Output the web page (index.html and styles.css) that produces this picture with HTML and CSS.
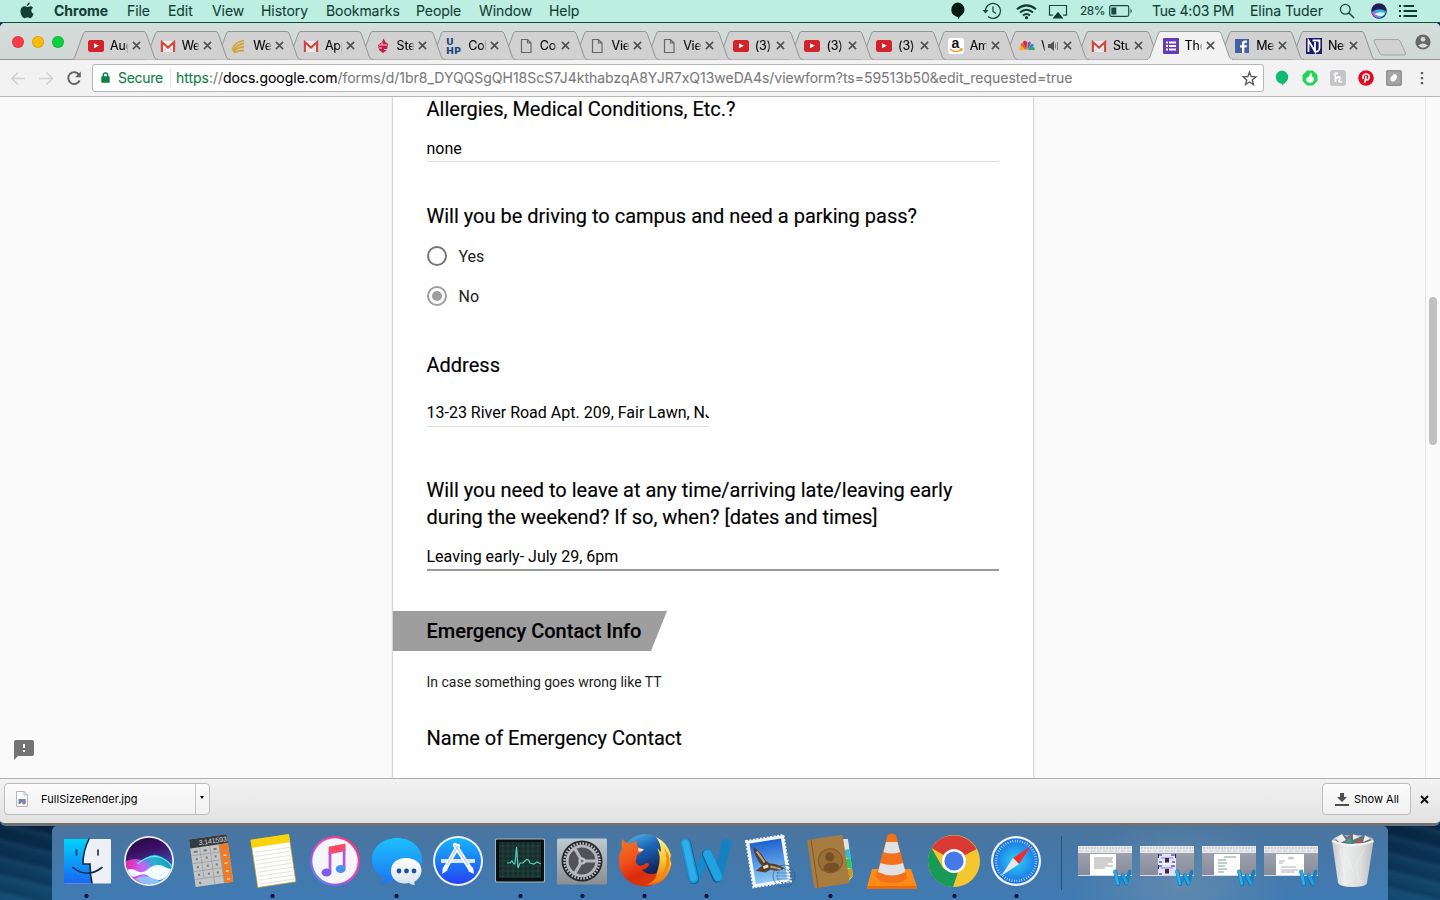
FILE: index.html
```html
<!DOCTYPE html>
<html lang="en">
<head>
<meta charset="utf-8">
<title>The Form</title>
<link rel="stylesheet" href="styles.css">
</head>
<body>
<svg class="defs" width="0" height="0">
<defs>
<linearGradient id="gBlue" x2="0" y2="1"><stop offset="0" stop-color="#1cc0fb"/><stop offset="1" stop-color="#1d76f3"/></linearGradient>
<linearGradient id="gApp" x2="0" y2="1"><stop offset="0" stop-color="#16b6fb"/><stop offset="1" stop-color="#2443f2"/></linearGradient>
<linearGradient id="gTunes" x1="1" y1="0" x2="0" y2="1"><stop offset="0" stop-color="#fb3358"/><stop offset=".45" stop-color="#e84bb8"/><stop offset=".7" stop-color="#a050ee"/><stop offset="1" stop-color="#2ab9f6"/></linearGradient>
<linearGradient id="gNote" x2="0" y2="1"><stop offset="0" stop-color="#fa3d5a"/><stop offset=".55" stop-color="#b552e6"/><stop offset="1" stop-color="#3a8cf4"/></linearGradient>
<linearGradient id="gFind" x2="0" y2="1"><stop offset="0" stop-color="#00d3fd"/><stop offset="1" stop-color="#1967f2"/></linearGradient>
<linearGradient id="gWhite" x2="0" y2="1"><stop offset="0" stop-color="#fff"/><stop offset="1" stop-color="#d9e2ea"/></linearGradient>
<linearGradient id="gMetal" x2="0" y2="1"><stop offset="0" stop-color="#bccad0"/><stop offset="1" stop-color="#8b8e91"/></linearGradient>
<linearGradient id="gFox" x2=".4" y2="1"><stop offset="0" stop-color="#f47a22"/><stop offset=".5" stop-color="#f0501a"/><stop offset=".85" stop-color="#dc2a0c"/><stop offset="1" stop-color="#d8360e"/></linearGradient>
<linearGradient id="gGlobe" x2=".4" y2="1"><stop offset="0" stop-color="#5cc0ee"/><stop offset=".45" stop-color="#1b64b4"/><stop offset="1" stop-color="#14215c"/></linearGradient>
<linearGradient id="gFlame" x2="0" y2="1"><stop offset="0" stop-color="#fff08a"/><stop offset=".5" stop-color="#fbc62c"/><stop offset="1" stop-color="#ee6010"/></linearGradient>
<linearGradient id="gSky" x2="0" y2="1"><stop offset="0" stop-color="#1d63cf"/><stop offset="1" stop-color="#8fcbf5"/></linearGradient>
<linearGradient id="gSiri" x2=".3" y2="1"><stop offset="0" stop-color="#200a3c"/><stop offset=".35" stop-color="#3a0f63"/><stop offset=".55" stop-color="#3b2a86"/><stop offset="1" stop-color="#4c7be0"/></linearGradient>
<linearGradient id="gTeal" x2="1" y2="0"><stop offset="0" stop-color="#b45cf0"/><stop offset=".5" stop-color="#25c8e4"/><stop offset="1" stop-color="#0f9fa8"/></linearGradient>
<linearGradient id="gPink" x2="1" y2="0"><stop offset="0" stop-color="#ff1fa6"/><stop offset=".5" stop-color="#d35cf4"/><stop offset="1" stop-color="#5ca8f8"/></linearGradient>
<radialGradient id="gSaf"><stop offset="0" stop-color="#2ad4f7"/><stop offset="1" stop-color="#1d6fe2"/></radialGradient>
<linearGradient id="gTrash" x2="1" y2="0"><stop offset="0" stop-color="#c4c6c8"/><stop offset=".3" stop-color="#eceeee"/><stop offset=".7" stop-color="#dcdddd"/><stop offset="1" stop-color="#b9bbbd"/></linearGradient>
<linearGradient id="gThumb" x2="0" y2="1"><stop offset="0" stop-color="#a4a8b4"/><stop offset="1" stop-color="#858b99"/></linearGradient>
<clipPath id="siriClip"><circle cx="26" cy="26" r="23.300"/></clipPath>
<symbol id="tab" viewBox="0 0 86 29"><path d="M0 28.500C2 28 2.500 27 3.200 25L11 3.500C12 1 12.500.5 14 .5H71C73 .5 73.500 1 74.500 3.500L82 25C83 27.500 83.500 28 86 28.500" fill="#d1d1d1" stroke="#919594"/></symbol>
<symbol id="tabOn" viewBox="0 0 86 29"><path d="M0 29V28.500C2 28 2.500 27 3.200 25L11 3.500C12 1 12.500.5 14 .5H71C73 .5 73.500 1 74.500 3.500L82 25C83 27.500 83.500 28 86 28.500V29" fill="#f2f2f2" stroke="#9a9d9c"/><path d="M1 29H85" stroke="#f2f2f2" stroke-width="2"/></symbol>
<symbol id="x" viewBox="0 0 10 10"><path d="M1 1L9 9M9 1L1 9" stroke="#505050" stroke-width="1.800" fill="none"/></symbol>
<symbol id="yt" viewBox="0 0 16 16"><rect y="2" width="16" height="12" rx="2.500" fill="#d3232a"/><path d="M6 5.300V10.300L10.800 7.800Z" fill="#fff"/></symbol>
<symbol id="gm" viewBox="0 0 16 16"><rect x="1" y="3" width="14" height="11" fill="#ececec"/><path d="M3 13.500L8 8.500L13 13.500" stroke="#ccc" fill="none"/><path d="M1.900 14V4L8 9.500L14.100 4V14" fill="none" stroke="#d5443a" stroke-width="2.100"/></symbol>
<symbol id="doc" viewBox="0 0 16 16"><path d="M3.500 1.500H9.500L13 5V14.500H3.500ZM9.500 1.500V5H13" fill="none" stroke="#666" stroke-width="1.200"/></symbol>
<symbol id="gold" viewBox="0 0 16 16"><path d="M1 12C3 6 7 3 13 2.500L13 14L3 14.500Z" fill="#d9bd74" opacity=".5"/><path d="M1 12C3 6 7 3 13 2.500M2 13C5 8 8 6 13 5.500M2 14C5 10.500 9 9 13 9M3 14.500C7 12.500 10 12.500 13 12.500" stroke="#cfa23a" stroke-width="1.400" fill="none"/></symbol>
<symbol id="torch" viewBox="0 0 16 16"><path d="M8.500.5L10.500 4L13 6L12 12L8 15L4 12L3 7L7 4Z" fill="#c51e49"/><path d="M4 7H12M4 10H7M9 11.500H13M7 4V7" stroke="#eec8d0" stroke-width="1"/></symbol>
<symbol id="word" viewBox="0 0 56 56"><path d="M40.500 43L49.500 10" stroke="#1581c2" stroke-width="10" stroke-linecap="round"/><path d="M18 44.500L30 20" stroke="#178acc" stroke-width="9.500" stroke-linecap="round"/><path d="M30 20.500L40 43.500" stroke="#0d5c94" stroke-width="10" stroke-linecap="round"/><path d="M30.500 20L41 43" stroke="#22a2e0" stroke-width="9" stroke-linecap="round"/><path d="M9 10L17 45" stroke="#0d639e" stroke-width="10.500" stroke-linecap="round"/><path d="M8.500 9.500L16.500 44.500" stroke="#1f98d6" stroke-width="9.500" stroke-linecap="round"/><path d="M8.500 9L16.500 44" stroke="#2eb0ea" stroke-width="6" stroke-linecap="round"/></symbol>
<symbol id="siri" viewBox="0 0 52 52"><circle cx="26" cy="26" r="25" fill="#eceef2"/><circle cx="26" cy="26" r="23.300" fill="url(#gSiri)"/><g clip-path="url(#siriClip)"><path d="M12 32Q26 18 34 20T51 34V44H12Z" fill="url(#gTeal)" opacity=".85"/><path d="M1 27Q10 22 18 25T36 38L34 52H1Z" fill="url(#gPink)" opacity=".9"/><path d="M14 29Q26 19 36 22T50 34" fill="none" stroke="#5ff0f6" stroke-width="1.200"/><path d="M2 36Q8 32 14 36Q19 39 24 35Q32 28 40 31Q46 35 51 34V39Q45 41 40 44Q32 47 24 40Q19 38 14 41Q8 43 2 40Z" fill="#f2fdff"/><path d="M12 44Q22 37 40 48L26 52Z" fill="#8fd3ff" opacity=".8"/></g></symbol>
<symbol id="thumb" viewBox="0 0 62 74"><rect x="4" y="20" width="54" height="30" fill="url(#gThumb)"/><rect x="4" y="20" width="54" height="7" fill="#e8e9ec"/><path d="M5 22H57" stroke="#b3b5ba" stroke-dasharray="2 1"/><path d="M5 25H57" stroke="#c9cbd0" stroke-dasharray="4 2"/><path d="M4 49.500H58" stroke="#d8dadf"/></symbol>
</defs>
</svg>
<header class="menubar">
  <nav class="menus">
    <svg class="apple" width="14" height="17" viewBox="0 0 14 17"><path d="M9.800.2C10 1.900 8.500 3.900 6.800 3.900C6.600 2.200 8.200.4 9.800.2ZM7.200 5C8 5 8.700 4.200 10.200 4.200C11.500 4.200 12.500 4.900 13.100 5.700C10.500 7.200 10.900 10.700 13.600 11.800C13 13.700 11.600 16.200 10.100 16.200C9 16.200 8.600 15.600 7.300 15.600C6 15.600 5.500 16.200 4.500 16.200C2.600 16.200.5 12.500.5 9.300C.5 6 2.500 4.300 4.500 4.300C5.700 4.300 6.500 5 7.200 5Z" fill="#123f34"/></svg>
    <b>Chrome</b><span>File</span><span>Edit</span><span>View</span><span>History</span><span>Bookmarks</span><span>People</span><span>Window</span><span>Help</span>
  </nav>
  <div class="status">
    <svg width="15" height="18" viewBox="0 0 15 18"><path d="M7.500.5A7 7 0 0 1 14.500 7.800C14.500 11 12 13 10 14.500L8 17.500V15A7.300 7.300 0 0 1 7.500.5Z" fill="#021a12"/></svg>
    <svg width="20" height="18" viewBox="0 0 20 18"><path d="M3.500 9A7.500 7.500 0 1 1 6 14.500M11 4.500V9.500L14 11.500" fill="none" stroke="#174a3d" stroke-width="1.300"/><path d="M.5 8H6.500L3.500 11.500Z" fill="#174a3d"/></svg>
    <svg width="21" height="17" viewBox="0 0 21 17"><path d="M1 6.300Q10.500-1.500 20 6.300M4 9.600Q10.500 4 17 9.600M7 12.600Q10.500 9.500 14 12.600" fill="none" stroke="#103c31" stroke-width="2"/><circle cx="10.500" cy="14.700" r="1.600" fill="#103c31"/></svg>
    <svg width="20" height="17" viewBox="0 0 20 17"><path d="M5 12.200H1.500V2.500H18.500V12.200H15" fill="none" stroke="#174a3d" stroke-width="1.200"/><path d="M10 8.800L15.500 15.500H4.500Z" fill="#103c31"/></svg>
    <span class="pct">28%</span>
    <svg width="25" height="14" viewBox="0 0 25 14"><rect x=".7" y="1.700" width="19" height="10.600" rx="1.500" fill="none" stroke="#174a3d" stroke-width="1.200"/><rect x="2.300" y="3.500" width="5" height="7" fill="#174a3d"/><path d="M21.500 4.500V9.500Q24 7 21.500 4.500" fill="#174a3d"/></svg>
    <span class="clock">Tue 4:03 PM</span><span class="user">Elina Tuder</span>
    <svg width="16" height="16" viewBox="0 0 16 16"><circle cx="6.300" cy="6.300" r="4.900" fill="none" stroke="#174a3d" stroke-width="1.300"/><path d="M9.800 9.800L15 15" stroke="#174a3d" stroke-width="1.500"/></svg>
    <svg width="16" height="16" viewBox="0 0 16 16"><circle cx="8" cy="8" r="7.800" fill="#221c56"/><path d="M1 9Q7 4 15 8Q15 13 9 15Q3 15 1 9Z" fill="#2fb2d8"/><path d="M.6 9Q5 7 9 12L6 15Q1.500 13 .6 9Z" fill="#b25fe4"/><path d="M3 11Q8 8 14 10Q12 14 8 13Z" fill="#d4f7ff"/></svg>
    <svg width="19" height="14" viewBox="0 0 19 14"><path d="M0 2H2M0 7H2M0 12H2M4.500 2H15M4.500 7H18M4.500 12H18" stroke="#103c31" stroke-width="1.800"/></svg>
  </div>
</header>

<main class="window">
  <div class="tabstrip">
    <div class="lights"><i class="red"></i><i class="amber"></i><i class="green"></i></div>
    <div class="tabs">
      <div class="tab t1"><svg class="shape"><use href="#tab"/></svg><svg class="fav"><use href="#yt"/></svg><span>Aug</span><svg class="close"><use href="#x"/></svg></div>
      <div class="tab t2"><svg class="shape"><use href="#tab"/></svg><svg class="fav"><use href="#gm"/></svg><span>We</span><svg class="close"><use href="#x"/></svg></div>
      <div class="tab t3"><svg class="shape"><use href="#tab"/></svg><svg class="fav"><use href="#gold"/></svg><span>We</span><svg class="close"><use href="#x"/></svg></div>
      <div class="tab t4"><svg class="shape"><use href="#tab"/></svg><svg class="fav"><use href="#gm"/></svg><span>App</span><svg class="close"><use href="#x"/></svg></div>
      <div class="tab t5"><svg class="shape"><use href="#tab"/></svg><svg class="fav"><use href="#torch"/></svg><span>Ste</span><svg class="close"><use href="#x"/></svg></div>
      <div class="tab t6"><svg class="shape"><use href="#tab"/></svg><svg class="fav" viewBox="0 0 16 16"><text class="uhp" x="0" y="6.500">U</text><text class="uhp" x="0" y="15.500">HP</text></svg><span>Col</span><svg class="close"><use href="#x"/></svg></div>
      <div class="tab t7"><svg class="shape"><use href="#tab"/></svg><svg class="fav"><use href="#doc"/></svg><span>Cor</span><svg class="close"><use href="#x"/></svg></div>
      <div class="tab t8"><svg class="shape"><use href="#tab"/></svg><svg class="fav"><use href="#doc"/></svg><span>Vie</span><svg class="close"><use href="#x"/></svg></div>
      <div class="tab t9"><svg class="shape"><use href="#tab"/></svg><svg class="fav"><use href="#doc"/></svg><span>Vie</span><svg class="close"><use href="#x"/></svg></div>
      <div class="tab t10"><svg class="shape"><use href="#tab"/></svg><svg class="fav"><use href="#yt"/></svg><span>(3)</span><svg class="close"><use href="#x"/></svg></div>
      <div class="tab t11"><svg class="shape"><use href="#tab"/></svg><svg class="fav"><use href="#yt"/></svg><span>(3)</span><svg class="close"><use href="#x"/></svg></div>
      <div class="tab t12"><svg class="shape"><use href="#tab"/></svg><svg class="fav"><use href="#yt"/></svg><span>(3)</span><svg class="close"><use href="#x"/></svg></div>
      <div class="tab t13"><svg class="shape"><use href="#tab"/></svg><svg class="fav" viewBox="0 0 16 16"><rect width="16" height="16" rx="3" fill="#fff"/><text class="amz" x="3.500" y="10">a</text><path d="M2 11Q8 16 13.500 11.500M11.500 11H14V13" fill="none" stroke="#f79a1d" stroke-width="1.300"/></svg><span>Am</span><svg class="close"><use href="#x"/></svg></div>
      <div class="tab t14"><svg class="shape"><use href="#tab"/></svg><svg class="fav" viewBox="0 0 16 16"><path d="M7 12L1 12Q-1 9 2.500 8Z" fill="#f6b51c"/><path d="M7 12L1.500 7.500Q2 4 5 5Z" fill="#ee6428"/><path d="M7.500 12L4 4Q6 1.500 8 4Z" fill="#d32441"/><path d="M8.500 12L8.500 5Q11 2 12 5Z" fill="#7555a6"/><path d="M9 12L11.500 6.500Q15.500 5 14.500 8Z" fill="#2482c9"/><path d="M9 12L14 8.500Q17 11 15 12Z" fill="#2ca55b"/></svg><span class="short">\</span><svg class="sound" width="11" height="10" viewBox="0 0 11 10"><path d="M0 3H2.500L6 0V10L2.500 7H0Z" fill="#555"/><path d="M7.500 2.500V7.500M9.500 1V9" stroke="#777" stroke-width=".9"/></svg><svg class="close"><use href="#x"/></svg></div>
      <div class="tab t15"><svg class="shape"><use href="#tab"/></svg><svg class="fav"><use href="#gm"/></svg><span>Stu</span><svg class="close"><use href="#x"/></svg></div>
      <div class="tab active"><svg class="shape"><use href="#tabOn"/></svg><svg class="fav" viewBox="0 0 16 16"><rect width="16" height="16" rx="1" fill="#673ab7"/><path d="M3 4.500H5M3 8H5M3 11.500H5M6 4.500H13M6 8H13M6 11.500H13" stroke="#fff" stroke-width="1.800"/></svg><span>The</span><svg class="close"><use href="#x"/></svg></div>
      <div class="tab t17"><svg class="shape"><use href="#tab"/></svg><svg class="fav" viewBox="0 0 16 16"><rect x="1" y="1" width="14" height="14" fill="#4460a0"/><path d="M10.300 15V9.500H12.500L12.900 7.300H10.300V5.800Q10.300 4.700 11.600 4.700H13V2.500H11Q8 2.500 8 5.500V7.300H6V9.500H8V15Z" fill="#fff"/></svg><span>Me</span><svg class="close"><use href="#x"/></svg></div>
      <div class="tab t18"><svg class="shape"><use href="#tab"/></svg><svg class="fav" viewBox="0 0 16 16"><rect width="16" height="16" fill="#191970"/><path d="M2.500 14V2.500L9 13.500V4M6.500 2.500H13.500V10Q13 14 9.500 13.500" fill="none" stroke="#fff" stroke-width="1.800"/></svg><span>New</span><svg class="close"><use href="#x"/></svg></div>
    </div>
    <svg class="newtab" width="34" height="17" viewBox="0 0 34 17"><path d="M3 .5H24Q26 .5 27 2L32.500 14Q33 16 31 16H10Q8 16 7 14.500L1 2.500Q.5.5 3 .5Z" fill="#d0d1d0" stroke="#a2a5a4"/></svg>
    <svg class="person" width="16" height="16" viewBox="0 0 16 16"><circle cx="8" cy="8" r="7.600" fill="#656968"/><circle cx="8" cy="5.300" r="2.400" fill="#d2d9d6"/><path d="M3.200 11.400Q8 7.500 12.800 11.400Q8 16 3.200 11.400Z" fill="#d2d9d6"/></svg>
  </div>
  <div class="toolbar">
    <svg class="nav" width="92" height="37" viewBox="0 0 92 37"><path d="M25 18.500H12M18 12.500L12 18.500L18 24.500M39 18.500H52M46.500 12.500L52.500 18.500L46.500 24.500" fill="none" stroke="#d1d1d1" stroke-width="1.600"/><path d="M79 14.600A5.900 5.900 0 1 0 79.600 20.500" fill="none" stroke="#636363" stroke-width="1.900"/><path d="M80.800 11.500V17.300H75Z" fill="#636363"/></svg>
    <div class="omnibox">
      <svg class="lock" width="9" height="11" viewBox="0 0 9 11"><path d="M2.300 5V3Q2.300 1 4.500 1T6.700 3V5" fill="none" stroke="#0b8043" stroke-width="1.400"/><rect x=".3" y="4.300" width="8.400" height="6.500" rx=".7" fill="#0b8043"/></svg>
      <span class="secure">Secure</span>
      <span class="url"><em>https</em>://<strong>docs.google.com</strong>/forms/d/1br8_DYQQSgQH18ScS7J4kthabzqA8YJR7xQ13weDA4s/viewform?ts=59513b50&amp;edit_requested=true</span>
      <svg class="star" width="15" height="15" viewBox="0 0 15 15"><path d="M7.500 1.200L9.200 5.500L13.900 5.900L10.300 8.900L11.400 13.500L7.500 11L3.600 13.500L4.700 8.900L1.100 5.900L5.800 5.500Z" fill="none" stroke="#5c5c5c" stroke-width="1.400"/></svg>
    </div>
    <div class="exts">
      <svg width="16" height="16" viewBox="0 0 16 16"><path d="M7.500.5A6.700 6.700 0 0 1 14.200 7.200C14.200 11 11 12.500 8 15.700V13.800A6.700 6.700 0 0 1 7.500.5Z" fill="#0fbb70"/></svg>
      <svg width="16" height="16" viewBox="0 0 16 16"><path d="M5 .5H11L15.500 5V11L11 15.500H5L.5 11V5Z" fill="#22d45a"/><path d="M4.500 8L7 6.500L8.500 3L9.800 3.500V6.500L11.700 7.500V10Q11.500 12.700 8 12.700Q4.300 12.700 4.300 10Z" fill="#fff"/></svg>
      <svg width="16" height="16" viewBox="0 0 16 16"><rect width="16" height="16" rx="3" fill="#c5c6c8"/><path d="M5.500 2.500V12M5.500 9Q8 6 10 7.500L9 11Q10 13 12 11M3.500 4.500L8 3" fill="none" stroke="#fff" stroke-width="1.700"/></svg>
      <svg width="16" height="16" viewBox="0 0 16 16"><circle cx="8" cy="8" r="7.800" fill="#e20a20"/><path d="M5.500 9Q4 6.500 6 4.800Q8 3.300 10.300 4.600Q12 6 10.700 8.600Q9.500 10.800 7.600 9.400M8.300 6L6.500 13" fill="none" stroke="#fff" stroke-width="1.600"/></svg>
      <svg width="16" height="16" viewBox="0 0 16 16"><rect width="16" height="16" rx="2" fill="#929292"/><rect x="1.500" y="1.500" width="13" height="13" rx="1" fill="#a4a4a4"/><ellipse cx="7.700" cy="8" rx="2.700" ry="4" transform="rotate(35 8 8)" fill="#fff"/></svg>
      <svg width="16" height="16" viewBox="0 0 16 16"><path d="M8 2V4.200M8 7V9.200M8 12V14.200" stroke="#606060" stroke-width="2.400"/></svg>
    </div>
  </div>
  <section class="page">
    <svg class="feedback" width="20" height="20" viewBox="0 0 20 20"><path d="M2 0H18Q20 0 20 2V14Q20 16 18 16H4L0 20V2Q0 0 2 0Z" fill="#737373"/><path d="M10 4V8M10 10V12" stroke="#fff" stroke-width="2"/></svg>
    <article class="card">
      <div class="q first"><h2>Allergies, Medical Conditions, Etc.?</h2><div class="answer">none</div></div>
      <div class="q choice"><h2>Will you be driving to campus and need a parking pass?</h2>
        <div class="option"><i class="radio"></i>Yes</div>
        <div class="option"><i class="radio on"></i>No</div></div>
      <div class="q address"><h2>Address</h2><div class="answer narrow">13-23 River Road Apt. 209, Fair Lawn, NJ 07410</div></div>
      <div class="q leave"><h2>Will you need to leave at any time/arriving late/leaving early<br>during the weekend? If so, when? [dates and times]</h2><div class="answer focus">Leaving early- July 29, 6pm</div></div>
      <div class="section"><h2>Emergency Contact Info</h2></div>
      <p>In case something goes wrong like TT</p>
      <h2 class="contact">Name of Emergency Contact</h2>
    </article>
    <div class="scroll"><i></i></div>
  </section>
  <footer class="downloads">
    <div class="file"><svg width="12" height="16" viewBox="0 0 12 16"><path d="M.5.5H8L11.500 4V15.500H.5Z" fill="#fbfbfb" stroke="#b8b8b8"/><path d="M8 .5V4H11.500" fill="none" stroke="#b8b8b8"/><path d="M2.500 8H9.500V11H6L4 13H2.500Z" fill="#6d80bb"/><circle cx="8" cy="11.500" r="2" fill="#8a8a95"/></svg><span>FullSizeRender.jpg</span><div class="drop"><i></i></div></div>
    <div class="showall"><svg width="14" height="13" viewBox="0 0 14 13"><path d="M5 0H9V4H12L7 9L2 4H5ZM0 11H14V13H0Z" fill="#4f4f4f"/></svg><span>Show All</span></div>
    <svg class="shut" width="9" height="9" viewBox="0 0 9 9"><path d="M1 1L8 8M8 1L1 8" stroke="#111" stroke-width="2"/></svg>
  </footer>
</main>

<div class="desktop">
<div class="dock">
  <svg class="run" viewBox="0 0 62 74"><rect x="8" y="13" width="47" height="44.500" rx="1" fill="#edf1f6"/><path d="M8 13H33Q27 25 27 38H34Q34 48 36 57.500H8Z" fill="url(#gFind)"/><path d="M20.500 24V29M42 24V29M17 41.500Q31 53 46 41.500M33 13Q27 25 27 38H34Q34 48 36 57" fill="none" stroke="#102a48" stroke-width="1.600" stroke-linecap="round"/></svg>
  <svg viewBox="0 0 62 74"><use href="#siri" x="5" y="9" width="52" height="52"/></svg>
  <svg viewBox="0 0 62 74"><g transform="translate(9 13.500) rotate(-8)"><rect width="38" height="48" fill="#c3c4c6"/><rect width="38" height="9" fill="#363c3e"/><text class="digits" x="9" y="7">3.141593</text><rect x="29" y="9" width="9" height="39" fill="#f27a20"/><path d="M0 16.500H38M0 24.500H38M0 32.500H38M0 40.500H38M9.500 9V40M19.500 9V48M29 9V48" stroke="#929496" stroke-width=".6"/><path d="M3 13H7M13 13H16M23 13H26M4 20.500H6M14 20.500H16M23 20.500H25M4 28.500H6M14 28.500H16M23 28.500H25M4 36.500H6M14 36.500H16M23 36.500H25M4 44.500H6" stroke="#77797b" stroke-width="2"/><path d="M32 20.500H35M32 28.500H35M32 36.500H35M32 44.500H35" stroke="#fff" stroke-width="1"/></g></svg>
  <svg class="run" viewBox="0 0 62 74"><g transform="translate(8.700 14) rotate(-8.500)"><rect width="38.500" height="48" fill="#fdfdfb" stroke="#c6a525" stroke-width=".7"/><rect width="38.500" height="8" fill="#fbd40c"/><path d="M2 13H37M2 17H37M2 21H37M2 25H37M2 29H37M2 33H37M2 37H37M2 41H37M2 45H37" stroke="#dcdede" stroke-width=".8"/></g></svg>
  <svg viewBox="0 0 62 74"><circle cx="31" cy="35" r="25" fill="url(#gTunes)"/><circle cx="31" cy="35" r="22.700" fill="#f6f6fa"/><path d="M24.600 20.800L41.500 17.500V25L24.600 28.500Z" fill="#f94964"/><path d="M26 26V46M40.100 23V42" stroke="#b45cdc" stroke-width="2.800"/><ellipse cx="22.500" cy="46.500" rx="5" ry="4" fill="#7d5cec"/><ellipse cx="36.700" cy="43" rx="5" ry="4" fill="#4892f4"/></svg>
  <svg class="run" viewBox="0 0 62 74"><path d="M31 12C45 12 56 21 56 33.500S45 55 31 55Q28 55 25 54.500Q20 59 14 58Q18 55 17.500 51.500C10 48 6 41 6 33.500C6 21 17 12 31 12Z" fill="url(#gBlue)"/><path d="M40 32C49 32 55.500 37 55.500 45Q55 52 48 56L49 59Q45 59 43 57C32 59 25 53 25 45C25 37 31 32 40 32Z" fill="url(#gWhite)"/><circle cx="33" cy="45" r="2.400" fill="#17549b"/><circle cx="40.500" cy="45" r="2.400" fill="#17549b"/><circle cx="48" cy="45" r="2.400" fill="#17549b"/></svg>
  <svg viewBox="0 0 62 74"><circle cx="30" cy="35" r="25" fill="#eef2f6"/><circle cx="30" cy="35" r="23" fill="url(#gApp)"/><path d="M13 35H47" stroke="#d7e7f6" stroke-width="4"/><path d="M30 20L17 43M27 19L43 44" stroke="#f4f7fa" stroke-width="4.500" stroke-linecap="round"/><path d="M30 20L19 39M27 19L40 39" stroke="#9dbbe0" stroke-width=".8"/><path d="M14 48L15 41L20 44ZM46 48L40 45L45 41Z" fill="#f4f7fa"/></svg>
  <svg class="run" viewBox="0 0 62 74"><rect x="5" y="12.500" width="50" height="44" rx="1.500" fill="#a7b4bc"/><rect x="6" y="13.500" width="48" height="42" rx="1" fill="#0c1011"/><rect x="9" y="16" width="42" height="36" fill="#172e2b"/><path d="M13 16V52M18 16V52M23 16V52M28 16V52M33 16V52M38 16V52M43 16V52M48 16V52M9 20H51M9 25H51M9 30H51M9 35H51M9 40H51M9 45H51M9 50H51" stroke="#27504a" stroke-width=".6"/><path d="M17 37H20L22 35L24 38H25L26.500 21L28 42L30 37H33L36 34Q38 32 40 37L44 38L47 36L51 38" stroke="#58cdb9" fill="none" stroke-width="1.200"/></svg>
  <svg class="run" viewBox="0 0 62 74"><rect x="5" y="12.500" width="50" height="46" rx="1.500" fill="url(#gMetal)"/><circle cx="30" cy="35" r="20.500" fill="#26282b"/><circle cx="30" cy="35" r="17.500" fill="none" stroke="#bcc0c3" stroke-width="2.500" stroke-dasharray="1.600 1.450"/><circle cx="30" cy="35" r="14.800" fill="#505357" stroke="#b5b9bd" stroke-width="2.800"/><path d="M30 35L22.500 22M30 35H44.500M30 35L22.500 48" stroke="#b5b9bd" stroke-width="3.200"/><circle cx="30" cy="35" r="3.600" fill="#c3c7ca"/><circle cx="30" cy="35" r="1.500" fill="#6b6e72"/></svg>
  <svg class="run" viewBox="0 0 62 74"><circle cx="30.500" cy="35" r="25.500" fill="url(#gFox)"/><circle cx="31" cy="29.500" r="21.500" fill="url(#gGlobe)"/><path d="M42 11Q53 16 57 29L56 33L57.500 38Q55 51 45 57Q35 61 27 57Q41 55 44 43Q48 30 43 22L47 26Q47 17 42 11Z" fill="url(#gFlame)"/><path d="M50 21Q55 33 50 45Q45 54 35 56Q43 58 50 51Q57 42 55 30Z" fill="#f08a18"/><path d="M8.500 13Q11 17 16 18Q20 15 23 15.500Q22 19 24 21L29 23Q29 26 24 28Q22 29 22.500 32Q20 38 26 40Q29 40 32 37Q36 37 35 39Q33 43 28 44Q34 50 43 47Q41 57 30 59Q12 58 6 43Q3 30 8 23Q7 18 8.500 13Z" fill="url(#gFox)"/><path d="M24 22L30 23.500Q28 26 24.500 25.500Z" fill="#f8efe8"/></svg>
  <svg class="run" viewBox="0 0 62 74"><use href="#word" x="1" y="8" width="56" height="56"/></svg>
  <svg viewBox="0 0 62 74"><g transform="translate(8 15) rotate(-9)"><rect width="38" height="47" fill="#f4f6f7" stroke="#f4f6f7" stroke-width="2" stroke-dasharray="2 1.500"/><rect x="3" y="3" width="32" height="41" fill="url(#gSky)"/><path d="M6 7Q12 11 16 22L20 26Q27 27 34 33Q27 36 20 32L14 34L5 31L12 27Q6 18 6 7Z" fill="#553f2d"/><path d="M9 12L15 24M20 29L30 33" stroke="#baa283" stroke-width="2"/><path d="M13 29L18 28" stroke="#eee3c8" stroke-width="3"/></g><circle cx="46" cy="50" r="11" fill="none" stroke="#35608b" opacity=".7"/><circle cx="46" cy="50" r="7" fill="none" stroke="#35608b" stroke-dasharray="2 1" opacity=".8"/><path d="M39 47H58M39 50H58M39 53H58" stroke="#35608b" stroke-width=".8" opacity=".6"/></svg>
  <svg class="run" viewBox="0 0 62 74"><path d="M42 13L48 13L53 50L47 57Z" fill="#e0e5df"/><path d="M44 24L49.500 23L51 32H46Z" fill="#38b9d5"/><path d="M45 33L50.500 32L52 42H47Z" fill="#20ce63"/><path d="M47 43L52 42L53 50L48 54Z" fill="#c59c22"/><g transform="translate(7 14) rotate(-8.500)"><rect width="36" height="49" rx="2" fill="#a87b40"/><path d="M4 0V49" stroke="#815b2b"/><circle cx="20" cy="24" r="12" fill="#9b6e36" stroke="#7e5929"/><circle cx="20" cy="20" r="4.500" fill="#755124"/><path d="M12 32Q12 27 18 26H22Q28 27 28 32Q20 39 12 32Z" fill="#755124"/></g></svg>
  <svg viewBox="0 0 62 74"><path d="M10 43L49 43L55 61Q55 63 53 63H7Q5 63 5 61Z" fill="#ff8b16"/><path d="M5 60H55V63H5Z" fill="#ec6a0a"/><path d="M25.500 9Q30 6 34 9L45 51Q43 57 30 57T14 51Z" fill="#f2711b"/><path d="M24 16H35.500L38 26Q30 29 21.500 26ZM18.500 37Q30 41 41 37L43.500 46Q30 53 16 46Z" fill="#e0e1e2"/></svg>
  <svg class="run" viewBox="0 0 62 74"><circle cx="30" cy="35" r="26" fill="#f4c731"/><path d="M30 35L7.500 22A26 26 0 0 1 52.500 23Z" fill="#da3a34"/><path d="M7.500 22L19 42Q24 47 34 46L29 61A26 26 0 0 1 7.500 22Z" fill="#179957"/><circle cx="30" cy="35" r="12" fill="#fff"/><circle cx="30" cy="35" r="9.600" fill="#4879e8"/></svg>
  <svg class="run" viewBox="0 0 62 74"><circle cx="30" cy="35" r="25" fill="#f2f4f5"/><circle cx="30" cy="35" r="22.800" fill="url(#gSaf)"/><circle cx="30" cy="35" r="20" fill="none" stroke="#cceefc" stroke-width="2.500" stroke-dasharray=".7 1.800"/><path d="M45 20L27 32L33 38Z" fill="#f52a2f"/><path d="M15 50L27 32L33 38Z" fill="#e5e8ea"/></svg>
  <div class="divider"></div>
  <svg viewBox="0 0 62 74"><use href="#thumb"/><rect x="16" y="28" width="26" height="21" fill="#fff"/><path d="M20 32H39M20 34H38M20 36H39M20 38H34M20 40H39M20 42H31" stroke="#888" stroke-width=".8"/><use href="#word" x="38" y="42" width="20" height="20"/></svg>
  <svg viewBox="0 0 62 74"><use href="#thumb"/><rect x="22" y="28" width="18" height="21" fill="#dfe1ff"/><path d="M23 29H26M35 29H39M23 36H26M36 36H39M23 40H26M35 40H39M23 48H26M22.500 28V32M39.500 28V32M22.500 39V43" stroke="#27235c"/><path d="M25 32H37M25 42H37" stroke="#8d80dc"/><rect x="29" y="32" width="4" height="4.500" fill="#432b2d"/><rect x="29" y="43" width="4" height="4.500" fill="#432b2d"/><path d="M22 38H40" stroke="#fff"/><use href="#word" x="38" y="42" width="20" height="20"/></svg>
  <svg viewBox="0 0 62 74"><use href="#thumb"/><rect x="16" y="28" width="26" height="21" fill="#fff"/><path d="M26 31H38M20 34H28M20 37H29M20 40H27M20 43H29M20 46H26" stroke="#7f9ea0" stroke-width="1"/><use href="#word" x="38" y="42" width="20" height="20"/></svg>
  <svg viewBox="0 0 62 74"><use href="#thumb"/><rect x="16" y="28" width="28" height="21" fill="#fff"/><ellipse cx="31" cy="32" rx="3" ry="1.500" fill="#c8c6dd"/><path d="M19 35H25M19 37H23M21 41H36M21 44H38M21 46H34" stroke="#999" stroke-width=".8"/><use href="#word" x="38" y="42" width="20" height="20"/></svg>
  <svg viewBox="0 0 62 74"><path d="M10 15L16 57Q18 61 31 61T45 57L51.500 15Z" fill="url(#gTrash)"/><ellipse cx="31" cy="14" rx="20.500" ry="5" fill="#b4b7b9"/><path d="M14 13L20 8L25 11L31 7L36 12L42 9L49 14L43 18L34 17L25 19L15 17Z" fill="#6b6e72"/><path d="M13 12L20 8L24 14L18 17ZM31 8L37 11L31 14ZM43 9L48 13L41 16Z" fill="#eceeee"/><path d="M23 16L28 12L30 17Z" fill="#2cac91"/><path d="M34 17L37 13L40 17Z" fill="#ba5548"/><path d="M10 15Q31 23 51.500 15" fill="none" stroke="#f4f5f5" stroke-width="2"/><path d="M18 23L23 52M43 23L34 37L37 55M24 27L31 46" fill="none" stroke="#f5f5f5" opacity=".5"/></svg>
</div>
</div>
</body>
</html>
```
FILE: styles.css
```css
* { box-sizing: border-box; }
body { margin: 0; width: 1440px; height: 900px; overflow: hidden; display: flex; flex-direction: column; background: #0b3050; font-family: Inter, "Liberation Sans", sans-serif; color: #000; }
.defs { position: absolute; }
svg { display: block; flex: none; overflow: visible; }
.menubar { flex: none; height: 23px; display: flex; justify-content: space-between; background: #bceee1; border-bottom: 1px solid #07503f; font-size: 14px; line-height: 22px; letter-spacing: -.06px; color: #123f34; white-space: nowrap; -webkit-text-stroke: .1px #123f34; }
.menus { display: grid; grid-template-columns: 34px 73px 41px 44px 49px 65px 90px 63px 70px 40px; padding-left: 20px; }
.apple { margin-top: 2px; }
.menus b { letter-spacing: 0; }
.status { display: grid; grid-template-columns: 32px 34px 32px 32px 29px 43px 98px 89px 32px 28px 41px; align-items: center; width: 490px; }
.status .pct { font-size: 12px; letter-spacing: -.5px; }
.status .clock { letter-spacing: -.22px; }
.window { flex: none; height: 803px; display: flex; flex-direction: column; background: #f2f2f2; border-radius: 5px 5px 6px 6px; overflow: hidden; border-bottom: 3px solid #6e7274; }
.tabstrip { flex: none; height: 37px; display: flex; background: linear-gradient(#d4dedb, #d0d7d4); border-bottom: 1px solid #919594; }
.lights { display: flex; gap: 8px; padding: 13px 0 0 12px; width: 72px; flex: none; }
.lights i { width: 12px; height: 12px; border-radius: 50%; border: 1px solid #0002; }
.red { background: #fc3c46; } .amber { background: #fdbc08; } .green { background: #0bd13d; }
.tabs { display: flex; width: 1301px; padding-top: 8px; flex: none; }
.tab { position: relative; flex: none; width: 71.65px; height: 29px; padding: 7px 0 0 16px; display: flex; font-size: 12.5px; line-height: 16px; letter-spacing: -.2px; -webkit-text-stroke: .1px #000; }
.shape { position: absolute; left: 0; top: 0; width: 86px; height: 29px; }
.tab .fav { position: relative; width: 16px; height: 16px; }
.tab span { position: relative; margin-left: 6px; width: 17.5px; overflow: hidden; white-space: nowrap; -webkit-mask-image: linear-gradient(90deg, #000 75%, #0003); mask-image: linear-gradient(90deg, #000 75%, #0003); }
.tab span.short { width: 3.5px; }
.tab .sound { position: relative; margin: 3px 0 0 3px; }
.tab .close { position: relative; width: 9px; height: 9px; margin: 3px 0 0 4px; }
.tab .sound + .close { margin-left: 4px; }
.t1 { z-index: 18; } .t2 { z-index: 17; } .t3 { z-index: 16; } .t4 { z-index: 15; } .t5 { z-index: 14; } .t6 { z-index: 13; } .t7 { z-index: 12; } .t8 { z-index: 11; } .t9 { z-index: 10; } .t10 { z-index: 9; } .t11 { z-index: 8; } .t12 { z-index: 7; } .t13 { z-index: 6; } .t14 { z-index: 5; } .t15 { z-index: 4; } .t17 { z-index: 2; } .t18 { z-index: 1; }
.active { z-index: 20; }
.uhp { font: bold 9.5px "DejaVu Sans", sans-serif; letter-spacing: 0; fill: #13467f; -webkit-text-stroke: 0; }
.amz { font: bold 14px "Liberation Sans", sans-serif; fill: #111; }
.newtab { margin-top: 16px; }
.person { margin: 11px 0 0 8px; }
.toolbar { flex: none; height: 37px; display: flex; border-bottom: 1px solid #b8b8b8; background: #f2f2f2; }
.omnibox { width: 1172px; height: 28px; margin-top: 4px; display: flex; align-items: center; background: #fff; border: 1px solid #b6b6b6; border-radius: 3px; padding-left: 8px; font-size: 14px; line-height: 20px; white-space: nowrap; }
.lock { margin: 0 0 1px; }
.secure { color: #0b8043; margin-left: 8px; width: 53px; height: 20px; border-right: 1px solid #e2e2e2; letter-spacing: -.3px; -webkit-text-stroke: .1px #0b8043; }
.url { color: #7b7b7b; margin: -1px 0 0 5px; width: 1066px; letter-spacing: -.015px; -webkit-text-stroke: .1px; }
.url em { font-style: normal; color: #0b8043; }
.url strong { font-weight: 400; color: #000; }
.exts { display: flex; gap: 12px; padding: 10px 0 0 10px; }
.page { flex: none; height: 681px; display: flex; background: #fafafa; font-family: Roboto, "Liberation Sans", sans-serif; overflow: hidden; }
.feedback { margin: 643px 359px 0 14px; }
.card { width: 640px; height: 681px; background: #fff; box-shadow: 0 0 2px #0007; padding-left: 33.5px; }
h2 { margin: 0; font-weight: 400; font-size: 20px; line-height: 27px; white-space: nowrap; -webkit-text-stroke: .15px #000; }
.first { margin-top: -1px; }
.answer { width: 572px; height: 25px; margin-top: 14px; font-size: 16px; line-height: 24px; border-bottom: 1px solid #dcdcdc; white-space: nowrap; overflow: hidden; }
.choice { margin-top: 41px; }
.option { display: flex; align-items: center; height: 20px; margin-top: 20px; font-size: 16px; color: #212121; }
h2 + .option { margin-top: 16px; }
.radio { width: 20px; height: 20px; margin-right: 12px; border: 2px solid #757575; border-radius: 50%; display: grid; place-items: center; }
.radio.on { border-color: #9e9e9e; }
.radio.on::before { content: ""; width: 10px; height: 10px; border-radius: 50%; background: #9e9e9e; }
.address { margin-top: 46px; }
.narrow { width: 282px; height: 26px; margin-top: 22px; }
.leave { margin-top: 50px; }
.focus { height: 26px; border-bottom: 2px solid #9b9b9b; }
.section { margin: 40px 0 0 -33.5px; width: 274px; height: 40px; padding: 7px 0 0 33.5px; background: #9e9e9e; clip-path: polygon(0 0, 100% 0, 258px 100%, 0 100%); }
.section h2 { font-weight: 500; }
.card p { margin: 20px 0 0; font-size: 14px; line-height: 22px; color: #212121; }
.contact { margin-top: 32px; }
.scroll { width: 15px; margin-left: 392px; border-left: 1px solid #e7e7e7; padding: 200px 0 0 3px; }
.scroll i { display: block; width: 8px; height: 148px; border-radius: 4px; background: #c1c1c1; }
.downloads { flex: none; height: 45px; display: flex; padding: 4px 0 0 4px; border-top: 1px solid #aeaeae; background: linear-gradient(#f2f2f2, #e2e2e2); font-size: 11px; }
.file, .showall { display: flex; align-items: center; height: 32px; border: 1px solid #bdbdbd; border-radius: 4px; background: linear-gradient(#fbfbfb, #f1f1f1); white-space: nowrap; }
.file { width: 206px; padding-left: 11px; letter-spacing: .05px; }
.file span { margin-left: 13px; width: 154px; }
.drop { height: 30px; width: 13px; border-left: 1px solid #c5c5c5; display: grid; place-items: center; }
.drop i { margin-top: -3px; border: 2.5px solid transparent; border-top: 3px solid #000; border-bottom: 0; }
.showall { width: 89px; margin-left: 1112px; padding-left: 12px; gap: 5px; }
.shut { margin: 12px 0 0 8.5px; }
.desktop { flex: none; height: 74px; padding: 0 52px; background: repeating-linear-gradient(14deg, #0b315200 0, #2a628638 6px, #04203c40 11px, #0b315200 17px), linear-gradient(#072340, #124a72); }
.dock { height: 74px; width: 1336px; padding-left: 4px; border-radius: 5px 5px 0 0; background: radial-gradient(ellipse 110px 70px at 1128px 60px, #7594ac99, transparent), linear-gradient(#4a759f, #3f7bb3); display: grid; grid-template-columns: repeat(16, 62px) 26px repeat(5, 62px); }
.dock > svg { width: 62px; height: 74px; }
.run { background: radial-gradient(circle at 30.5px 70px, #07143d 1.800px, transparent 2.400px); }
.divider { width: 1px; height: 54px; margin: 10px 0 0 13px; background: #28547d; }
.digits { font: 7px "Liberation Sans", sans-serif; fill: #ddd; letter-spacing: -.1px; }
```
